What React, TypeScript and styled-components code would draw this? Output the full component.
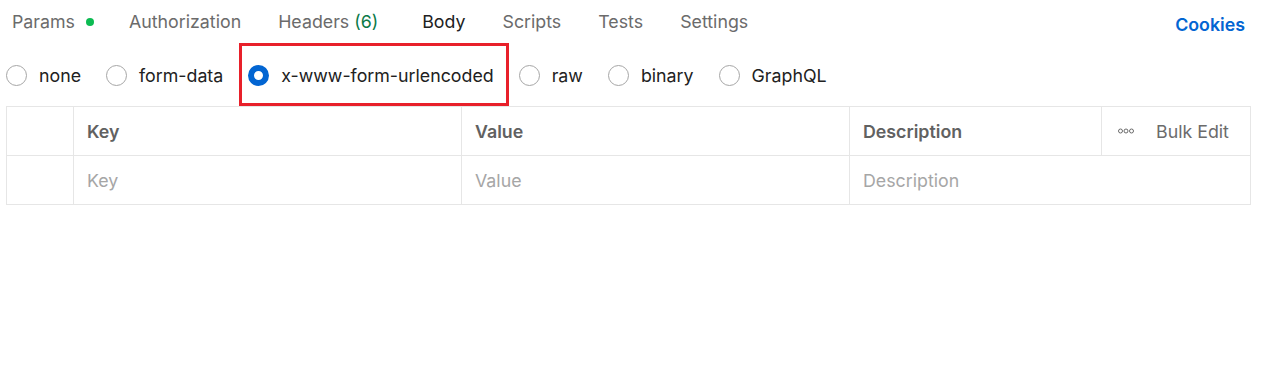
import React from "react";
import styled, { createGlobalStyle } from "styled-components";

const Global = createGlobalStyle`
  html, body { margin: 0; padding: 0; background: #fff; }
  body { font-family: Inter, "Noto Sans", sans-serif; -webkit-font-smoothing: antialiased; }
  * { box-sizing: border-box; }
`;

const Page = styled.div`
  width: 1274px;
  height: 370px;
  background: #fff;
  padding: 0 23px 0 6px;
`;

const TabBar = styled.div`
  display: flex;
  align-items: center;
  height: 43px;
  padding: 2px 6px 0 6px;
`;

const Tab = styled.div<{ $active?: boolean; $extra?: number }>`
  display: flex;
  align-items: center;
  font-size: 17.8px;
  color: ${(p) => (p.$active ? "#212121" : "#6b6b6b")};
  margin-right: ${(p) => 37 + (p.$extra || 0)}px;
  line-height: 22px;
  padding-bottom: 1px;
`;

const Count = styled.span`
  color: #0b7a48;
  margin-left: 5px;
`;

const Dot = styled.span`
  width: 8px;
  height: 8px;
  border-radius: 50%;
  background: #0cbb52;
  margin-left: 11px;
`;

const Spacer = styled.div`
  flex: 1;
`;

const CookiesLink = styled.div`
  font-size: 17.8px;
  font-weight: 600;
  color: #0265d2;
  margin-top: 4px;
`;

const RadioRow = styled.div`
  display: flex;
  align-items: center;
  height: 63px;
  padding-top: 2px;
  gap: 25px;
`;

const Option = styled.label`
  position: relative;
  display: flex;
  align-items: center;
  gap: 12px;
  font-size: 17.8px;
  color: #212121;
  line-height: 22px;
`;

const Highlight = styled.span`
  position: absolute;
  left: -9px;
  right: -15px;
  top: -22px;
  bottom: -19px;
  border: 3px solid #e8202a;
  pointer-events: none;
`;

const Radio = styled.span<{ $checked?: boolean }>`
  width: 21px;
  height: 21px;
  border-radius: 50%;
  border: ${(p) => (p.$checked ? "6px solid #0265d2" : "1px solid #a6a6a6")};
  background: #fff;
  flex-shrink: 0;
`;

const Table = styled.div`
  width: 1245px;
  border: 1px solid #e6e6e6;
`;

const Row = styled.div<{ $last?: boolean }>`
  display: grid;
  grid-template-columns: 67px 388px 388px 252px 1fr;
  height: ${(p) => (p.$last ? 48 : 49)}px;
  border-bottom: ${(p) => (p.$last ? "none" : "1px solid #e6e6e6")};
`;

const Cell = styled.div<{ $head?: boolean; $noBorder?: boolean; $span?: number }>`
  display: flex;
  align-items: center;
  padding-left: 13px;
  font-size: 17.8px;
  font-weight: ${(p) => (p.$head ? 600 : 400)};
  color: ${(p) => (p.$head ? "#616161" : "#a6a6a6")};
  border-right: ${(p) => (p.$noBorder ? "none" : "1px solid #e6e6e6")};
  grid-column: ${(p) => (p.$span ? `span ${p.$span}` : "auto")};
`;

const BulkCell = styled.div`
  display: flex;
  align-items: center;
  padding-left: 16px;
  gap: 22px;
  font-size: 17.8px;
  color: #6b6b6b;
`;

const Dots = styled.svg`
  display: block;
`;

export default function App() {
  const options = ["none", "form-data", "x-www-form-urlencoded", "raw", "binary", "GraphQL"];
  return (
    <>
      <Global />
      <Page>
        <TabBar>
          <Tab $extra={-2}>
            Params
            <Dot />
          </Tab>
          <Tab>Authorization</Tab>
          <Tab $extra={7}>
            Headers<Count>(6)</Count>
          </Tab>
          <Tab $active>Body</Tab>
          <Tab>Scripts</Tab>
          <Tab>Tests</Tab>
          <Tab>Settings</Tab>
          <Spacer />
          <CookiesLink>Cookies</CookiesLink>
        </TabBar>
        <RadioRow>
          {options.map((o) => {
            const sel = o === "x-www-form-urlencoded";
            return (
              <Option key={o}>
                {sel && <Highlight />}
                <Radio $checked={sel} />
                {o}
              </Option>
            );
          })}
        </RadioRow>
        <Table>
          <Row>
            <Cell />
            <Cell $head>Key</Cell>
            <Cell $head>Value</Cell>
            <Cell $head>Description</Cell>
            <BulkCell>
              <Dots width="16" height="6" viewBox="0 0 16 6">
                <circle cx="2.5" cy="3" r="2" fill="none" stroke="#6b6b6b" strokeWidth="1" />
                <circle cx="8" cy="3" r="2" fill="none" stroke="#6b6b6b" strokeWidth="1" />
                <circle cx="13.5" cy="3" r="2" fill="none" stroke="#6b6b6b" strokeWidth="1" />
              </Dots>
              Bulk Edit
            </BulkCell>
          </Row>
          <Row $last>
            <Cell />
            <Cell>Key</Cell>
            <Cell>Value</Cell>
            <Cell $noBorder $span={2}>Description</Cell>
          </Row>
        </Table>
      </Page>
    </>
  );
}
